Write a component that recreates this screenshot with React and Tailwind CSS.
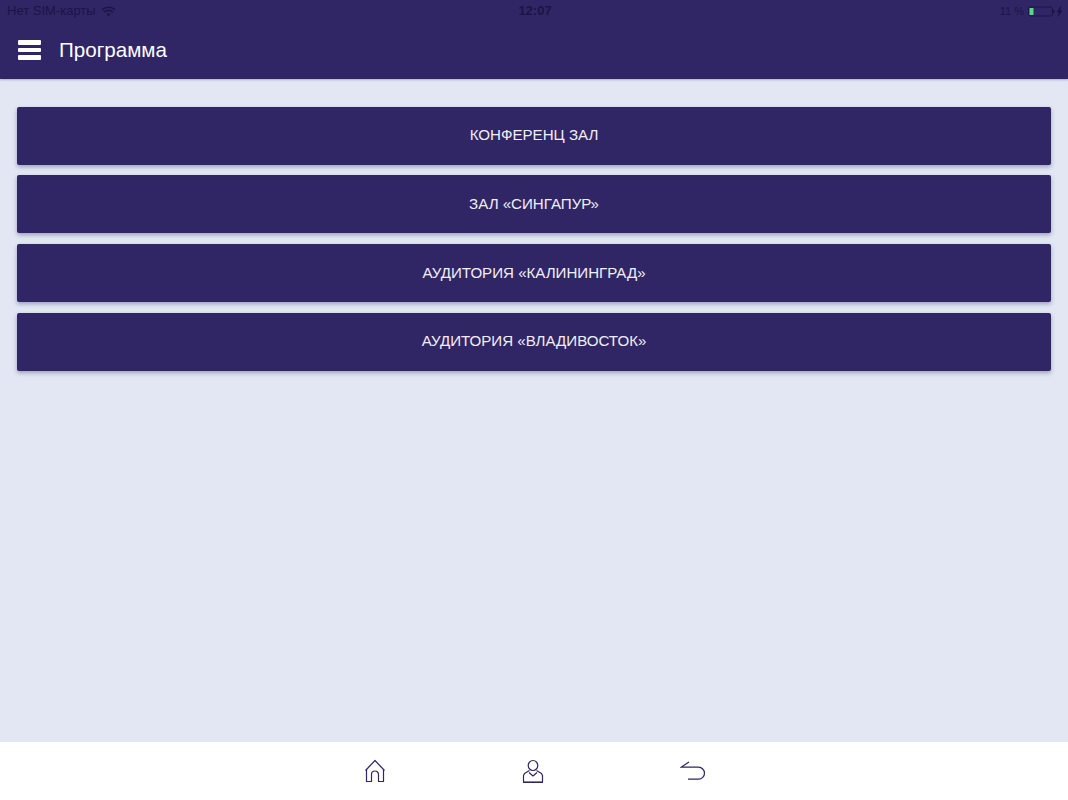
import React from 'react';

const rooms = [
  'КОНФЕРЕНЦ ЗАЛ',
  'ЗАЛ «СИНГАПУР»',
  'АУДИТОРИЯ «КАЛИНИНГРАД»',
  'АУДИТОРИЯ «ВЛАДИВОСТОК»',
];

const WifiIcon = () => (
  <svg width="15" height="11" viewBox="0 0 15 11" fill="none" stroke="#1b1446" strokeWidth="1.6">
    <path d="M1 3.8C4.6 .4 10.4 .4 14 3.8" />
    <path d="M3.2 6C5.6 3.8 9.4 3.8 11.8 6" />
    <path d="M7.5 10.2 5.4 8C6.6 7 8.4 7 9.6 8Z" fill="#1b1446" stroke="none" />
  </svg>
);

const BatteryIcon = () => (
  <svg width="35" height="11" viewBox="0 0 35 11" fill="none" className="shrink-0">
    <rect x="0.5" y="1" width="24" height="9" rx="2" stroke="#1b1446" strokeWidth="1" />
    <rect x="1.5" y="2" width="4" height="7" rx="0.5" fill="#5fd38a" />
    <path d="M25.5 4v3" stroke="#1b1446" strokeWidth="1.2" />
    <path d="M32.8.5 29 6h2.2l-1 4.5 3.8-5.8h-2.3z" fill="#1b1446" stroke="#1b1446" strokeWidth="0.5" />
  </svg>
);

const HomeIcon = () => (
  <svg width="22" height="24" viewBox="0 0 22 24" fill="none" stroke="#2f2664" strokeWidth="1.2" strokeLinejoin="round">
    <path d="M1.5 11.5 11 1.5l9.5 10" />
    <path d="M2.5 10.5V22.5H7.5V15.5a3.5 3.5 0 0 1 7 0V22.5H19.5V10.5" />
  </svg>
);

const UserIcon = () => (
  <svg width="22" height="24" viewBox="0 0 22 24" fill="none" stroke="#2f2664" strokeWidth="1.2" strokeLinejoin="round">
    <ellipse cx="11" cy="6.5" rx="4.8" ry="5" />
    <path d="M7.5 11.5 2.5 14.5 1.5 16.5V23" />
    <path d="M14.5 11.5 19.5 14.5 20.5 16.5V23" />
    <path d="M7 13.5 11 17l4-3.5" />
    <path d="M1 23.2H21" strokeWidth="1.6" />
  </svg>
);

const BackIcon = () => (
  <svg width="26" height="20" viewBox="0 0 26 20" fill="none" stroke="#2f2664" strokeWidth="1.2">
    <path d="M9 1 1 6.2H18.5a6 6 0 0 1 0 12H8" />
  </svg>
);

export default function App() {
  return (
    <div className="flex h-[800px] w-full flex-col bg-[#e2e7f3] font-['Liberation_Sans',Arial,sans-serif]">
      <header className="h-[79px] bg-[#312665] shadow-[0_1px_2px_rgba(49,38,101,0.3)]">
        <div className="flex h-[22px] items-center justify-between pl-[7px] pr-[5px] text-[13px] text-[#1b1446]">
          <div className="flex flex-1 items-center gap-[5px]">
            <span>Нет SIM-карты</span>
            <WifiIcon />
          </div>
          <span className="text-[13px] font-bold">12:07</span>
          <div className="flex flex-1 items-center justify-end gap-[4px]">
            <span className="text-[11px]">11 %</span>
            <BatteryIcon />
          </div>
        </div>
        <div className="flex h-[57px] items-center pb-[1px] pl-[18px]">
          <div className="flex w-[23px] flex-col gap-[3px]">
            <div className="h-[4.5px] rounded-[1px] bg-white" />
            <div className="h-[4.5px] rounded-[1px] bg-white" />
            <div className="h-[4.5px] rounded-[1px] bg-white" />
          </div>
          <h1 className="ml-[18px] text-[20.6px] text-white">Программа</h1>
        </div>
      </header>

      <main className="flex flex-1 flex-col gap-[10.75px] px-[17px] pt-[27.5px]">
        {rooms.map((room) => (
          <button
            key={room}
            className="h-[58px] w-full rounded-[2px] bg-[#312665] text-[15.1px] text-[#f0eff7] shadow-[0_2px_4px_rgba(30,25,80,0.35)]"
          >
            {room}
          </button>
        ))}
      </main>

      <nav className="flex h-[58px] items-center justify-center gap-[136px] bg-white pl-[2px]">
        <HomeIcon />
        <UserIcon />
        <BackIcon />
      </nav>
    </div>
  );
}
